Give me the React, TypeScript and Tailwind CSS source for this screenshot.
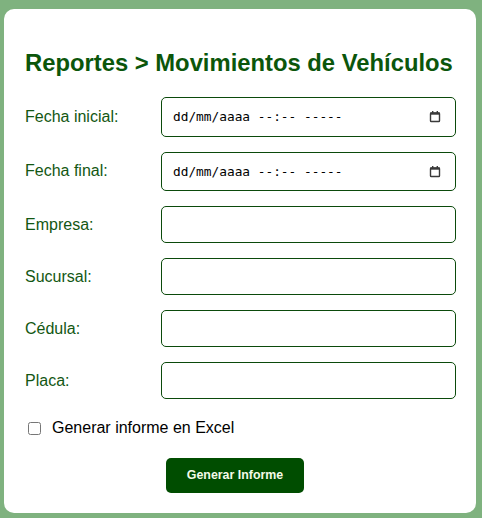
import React from "react";

const CalendarIcon = () => (
  <svg width="12" height="13" viewBox="0 0 12 13" className="block">
    <rect x="1.5" y="3" width="9" height="8.5" rx="0.8" fill="none" stroke="#3a3a3a" strokeWidth="1.4" />
    <rect x="1" y="2.5" width="10" height="2.2" fill="#3a3a3a" />
    <rect x="3" y="1" width="1.4" height="2" fill="#3a3a3a" />
    <rect x="7.6" y="1" width="1.4" height="2" fill="#3a3a3a" />
  </svg>
);

const DateField = () => (
  <div className="flex h-[39.5px] w-[295px] items-center justify-between rounded-[5px] border border-[#0b4a0b] bg-white pl-[11px] pr-[14px]">
    <span className="text-[12.8px] text-black" style={{ fontFamily: '"DejaVu Sans Mono", "Liberation Mono", monospace' }}>
      dd/mm/aaaa --:-- -----
    </span>
    <CalendarIcon />
  </div>
);

const TextField = () => (
  <input
    type="text"
    className="block h-[37px] w-[295px] rounded-[5px] border border-[#0b4a0b] bg-white px-[10px] text-[14px] outline-none"
  />
);

const Row = ({ label, children }: { label: string; children: React.ReactNode }) => (
  <div className="flex items-center">
    <label className="w-[136px] text-[16px] leading-[20px] text-[#135713]">{label}</label>
    {children}
  </div>
);

export default function App() {
  return (
    <div className="min-h-[518px] w-[482px] bg-[#7fb27f] pt-[9px] pb-[5px] pl-[4px] pr-[6px]" style={{ fontFamily: '"Liberation Sans", Arial, sans-serif' }}>
      <div className="flex flex-col rounded-[10px] bg-white pl-[21px] pr-[20px] pt-[40px] pb-[20px]">
        <h1 className="mb-[20px] whitespace-nowrap text-[23.8px] font-bold leading-[28px] text-[#0b560b]">
          Reportes &gt; Movimientos de Vehículos
        </h1>
        <div className="flex flex-col gap-[15px]">
          <Row label="Fecha inicial:">
            <DateField />
          </Row>
          <Row label="Fecha final:">
            <DateField />
          </Row>
          <Row label="Empresa:">
            <TextField />
          </Row>
          <Row label="Sucursal:">
            <TextField />
          </Row>
          <Row label="Cédula:">
            <TextField />
          </Row>
          <Row label="Placa:">
            <TextField />
          </Row>
        </div>
        <div className="mt-[19px] flex items-center">
          <input type="checkbox" className="ml-[3px] h-[13px] w-[13px]" />
          <span className="ml-[11px] text-[16px] leading-[20px] text-black">Generar informe en Excel</span>
        </div>
        <div className="mt-[20px] flex">
          <button className="ml-[141px] h-[35px] w-[138px] rounded-[5px] bg-[#004d00] text-[12.4px] font-bold text-[#f4fbe8]">
            Generar Informe
          </button>
        </div>
      </div>
    </div>
  );
}
